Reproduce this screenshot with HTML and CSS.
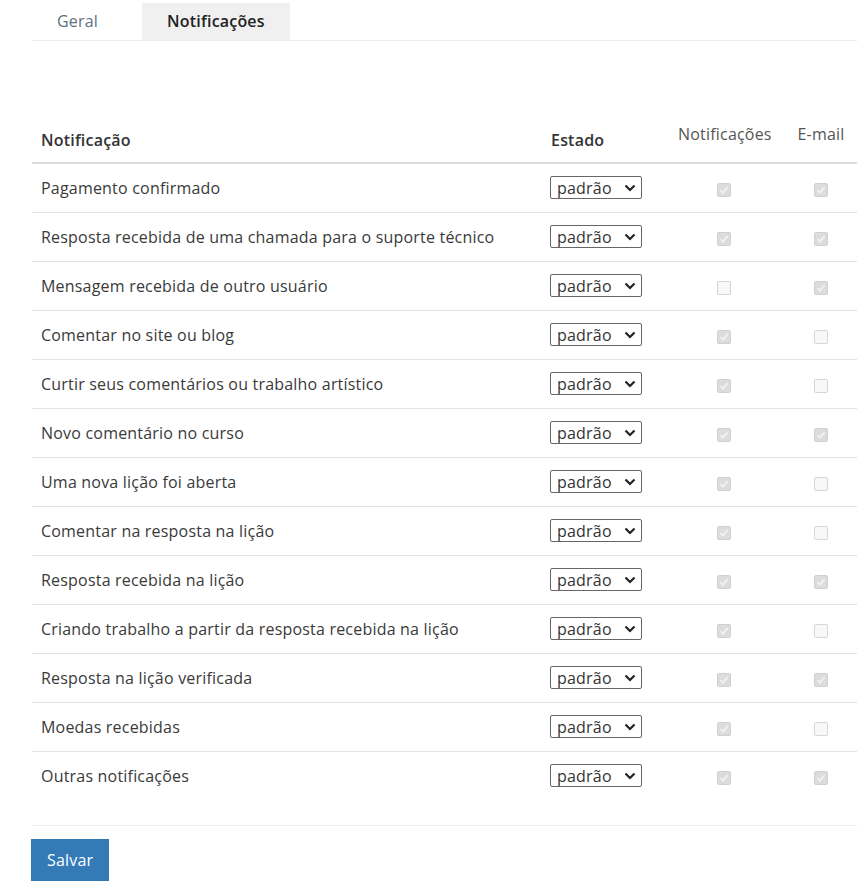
FILE: index.html
```html
<!DOCTYPE html>
<html lang="pt">
<head>
    <meta charset="UTF-8">
    <title>Notificações</title>
    <link rel="stylesheet" href="styles.css">
</head>
<body>
    <div class="page">
        <ul class="tabs">
            <li class="tab">Geral</li>
            <li class="tab active">Notificações</li>
        </ul>

        <table class="notify">
            <colgroup>
                <col class="c-name">
                <col class="c-state">
                <col class="c-site">
                <col class="c-mail">
            </colgroup>
            <thead>
                <tr>
                    <th>Notificação</th>
                    <th>Estado</th>
                    <th class="ch">Notificações</th>
                    <th class="ch">E-mail</th>
                </tr>
            </thead>
            <tbody id="rows"></tbody>
        </table>

        <div class="actions">
            <button class="btn">Salvar</button>
        </div>
    </div>

    <script>
        const items = [
            ['Pagamento confirmado', 1, 1],
            ['Resposta recebida de uma chamada para o suporte técnico', 1, 1],
            ['Mensagem recebida de outro usuário', 0, 1],
            ['Comentar no site ou blog', 1, 0],
            ['Curtir seus comentários ou trabalho artístico', 1, 0],
            ['Novo comentário no curso', 1, 1],
            ['Uma nova lição foi aberta', 1, 0],
            ['Comentar na resposta na lição', 1, 0],
            ['Resposta recebida na lição', 1, 1],
            ['Criando trabalho a partir da resposta recebida na lição', 1, 0],
            ['Resposta na lição verificada', 1, 1],
            ['Moedas recebidas', 1, 0],
            ['Outras notificações', 1, 1]
        ];

        const check = '<svg width="10" height="10" viewBox="0 0 10 10"><path d="M1.5 5.2 L4 7.6 L8.6 2.2" fill="none" stroke="#f2f2f2" stroke-width="1.8"/></svg>';

        function box(on) {
            return on ? '<span class="box on">' + check + '</span>' : '<span class="box"></span>';
        }

        const chevron = '<svg class="chev" width="12" height="8" viewBox="0 0 12 8"><path d="M1.5 1.5 L6 6 L10.5 1.5" fill="none" stroke="#222" stroke-width="2.2"/></svg>';

        let html = '';
        items.forEach(function(it) {
            html += '<tr>' +
                '<td>' + it[0] + '</td>' +
                '<td><span class="sel">padrão' + chevron + '</span></td>' +
                '<td class="ch">' + box(it[1]) + '</td>' +
                '<td class="ch">' + box(it[2]) + '</td>' +
                '</tr>';
        });
        document.getElementById('rows').innerHTML = html;
    </script>
</body>
</html>
```

FILE: styles.css
```css
html, body {
    margin: 0;
}

body {
    font-family: "Open Sans", Lato, sans-serif;
    font-size: 16px;
    letter-spacing: 0.2px;
    color: #3a3a3a;
    background: #fff;
}

.page {
    padding-left: 32px;
    padding-top: 3px;
}

.tabs {
    list-style: none;
    margin: 0;
    padding: 0;
    display: flex;
    gap: 19px;
    border-bottom: 1px solid #ebebeb;
}

.tab {
    padding: 0 25px;
    height: 37px;
    line-height: 37px;
    color: #607080;
}

.tab.active {
    background: #f0f0f0;
    color: #222;
    font-weight: 600;
}

.notify {
    margin-top: 74px;
    border-collapse: collapse;
    table-layout: fixed;
    width: 825px;
}

.c-name { width: 510px; }
.c-state { width: 127px; }
.c-site { width: 110px; }
.c-mail { width: 78px; }

.notify th {
    text-align: left;
    vertical-align: bottom;
    padding: 8px 8px 11px 9px;
    line-height: 22px;
    font-weight: 600;
    color: #333;
    border-bottom: 2px solid #ddd;
}

.notify th.ch {
    text-align: center;
    font-weight: normal;
    color: #555;
    padding-bottom: 17px;
}

.notify td {
    padding: 0 8px 0 9px;
    height: 48px;
    line-height: 20px;
    border-top: 1px solid #e2e2e2;
    vertical-align: middle;
}

.notify tbody tr:first-child td {
    border-top: 0;
}

.notify td.ch {
    text-align: center;
    padding-left: 8px;
}

.notify th.ch:last-child,
.notify td.ch:last-child {
    padding-left: 11px;
    padding-right: 5px;
}

.sel {
    display: inline-flex;
    align-items: center;
    justify-content: space-between;
    vertical-align: middle;
    box-sizing: border-box;
    width: 92px;
    height: 23px;
    margin-left: -1px;
    margin-top: -1px;
    padding: 0 5px 0 6px;
    border: 1px solid #666;
    border-radius: 2px;
    line-height: 20px;
    color: #333;
}

.chev {
    display: block;
}

.box {
    display: inline-block;
    box-sizing: border-box;
    width: 14px;
    height: 14px;
    border: 1px solid #d6d6d6;
    border-radius: 2px;
    background: #f8f8f8;
    vertical-align: middle;
}

.box.on {
    background: #dcdcdc;
    border-color: #d0d0d0;
}

.box svg {
    display: block;
    margin: 1px;
}

.actions {
    margin-top: 25px;
    border-top: 1px solid #eee;
    padding-top: 13px;
}

.btn {
    font-family: inherit;
    font-size: 16px;
    letter-spacing: 0.2px;
    background: #337ab7;
    color: #fff;
    border: 0;
    margin-left: -1px;
    padding: 10px 16px;
    line-height: 22px;
}
```
